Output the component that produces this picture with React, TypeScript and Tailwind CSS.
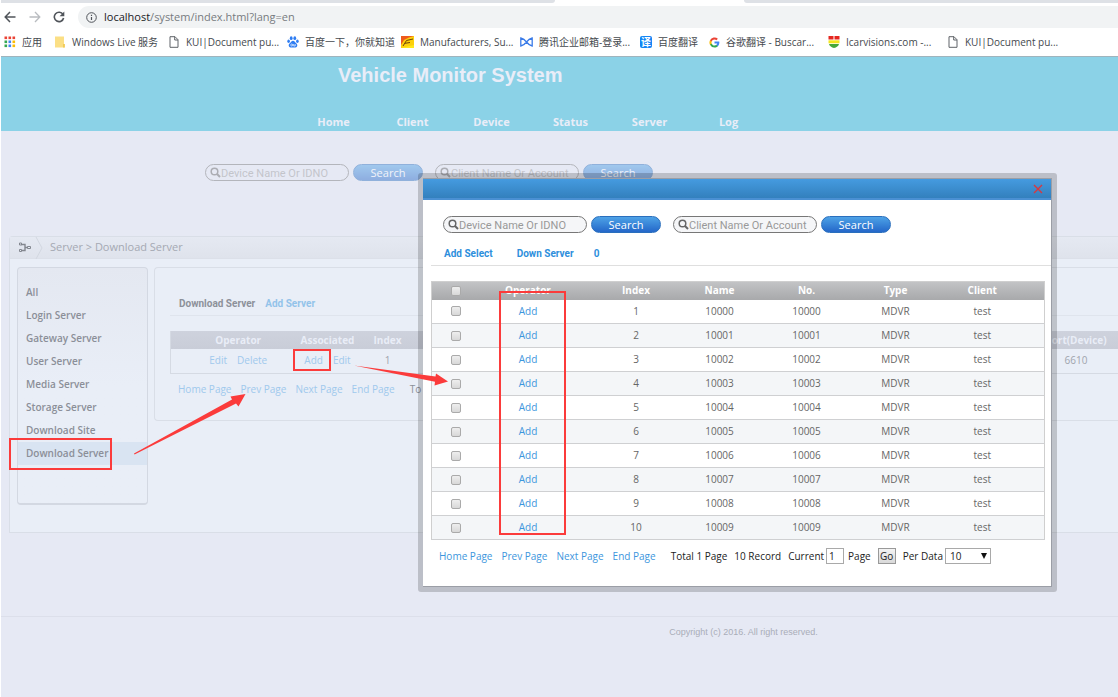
import React from 'react';

const bookmarks = [
  { id: 1, icon: 'apps', label: '应用', width: 'w-[50px]' },
  { id: 2, icon: 'folder', label: 'Windows Live 服务', width: 'w-[114px]' },
  { id: 3, icon: 'file', label: 'KUI|Document pu...', width: 'w-[119px]' },
  { id: 4, icon: 'baidu', label: '百度一下，你就知道', width: 'w-[114px]' },
  { id: 5, icon: 'car', label: 'Manufacturers, Su...', width: 'w-[119px]' },
  { id: 6, icon: 'mail', label: '腾讯企业邮箱-登录...', width: 'w-[120px]' },
  { id: 7, icon: 'translate', label: '百度翻译', width: 'w-[69px]' },
  { id: 8, icon: 'google', label: '谷歌翻译 - Buscar...', width: 'w-[119px]' },
  { id: 9, icon: 'shield', label: 'Icarvisions.com -...', width: 'w-[119px]' },
  { id: 10, icon: 'file', label: 'KUI|Document pu...', width: 'w-[119px]' },
];

const navItems = ['Home', 'Client', 'Device', 'Status', 'Server', 'Log'];

const serverMenu = [
  'All',
  'Login Server',
  'Gateway Server',
  'User Server',
  'Media Server',
  'Storage Server',
  'Download Site',
  'Download Server',
];

const devices = Array.from({ length: 10 }, (_, i) => ({
  index: i + 1,
  name: String(10000 + i),
  no: String(10000 + i),
  type: 'MDVR',
  client: 'test',
}));

const pageLinks = ['Home Page', 'Prev Page', 'Next Page', 'End Page'];

const BookmarkIcon = ({ name }: { name: string }) => {
  switch (name) {
    case 'apps':
      return (
        <svg width="12" height="12" viewBox="0 0 12 12">
          {['#ea4335', '#ea4335', '#ea4335', '#34a853', '#4285f4', '#fbbc05', '#34a853', '#4285f4', '#fbbc05'].map((c, i) => (
            <rect key={i} x={0.5 + (i % 3) * 4} y={0.5 + Math.floor(i / 3) * 4} width="2.6" height="2.6" fill={c} />
          ))}
        </svg>
      );
    case 'folder':
      return (
        <svg width="12" height="12" viewBox="0 0 12 12">
          <path d="M1 .5h9v7.500h.8V11a.6.6 0 0 1-.6.600H1z" fill="#fbdf85" />
          <path d="M9 8h1.800v3.500H9z" fill="#f1cb58" />
        </svg>
      );
    case 'file':
      return (
        <svg width="12" height="12" viewBox="0 0 12 12" fill="none" stroke="#5f6368">
          <path d="M2 .7h5l3 3v7.600H2z" />
          <path d="M6.700.7v3.300H10" />
        </svg>
      );
    case 'baidu':
      return (
        <svg width="12" height="12" viewBox="0 0 12 12" fill="#2f7df2">
          <ellipse cx="4.200" cy="2.200" rx="1.400" ry="1.900" />
          <ellipse cx="7.800" cy="2.200" rx="1.400" ry="1.900" />
          <ellipse cx="1.600" cy="5.200" rx="1.300" ry="1.700" />
          <ellipse cx="10.400" cy="5.200" rx="1.300" ry="1.700" />
          <path d="M6 4.800c1.400 0 1.900 1.300 2.900 2.200 1.300 1.200 1.600 2 1.300 3.100-.5 1.800-2.500 1.400-4.200 1.400s-3.700.4-4.200-1.400c-.3-1.100 0-1.900 1.300-3.100C4.100 6.100 4.600 4.800 6 4.800z" />
          <circle cx="4.700" cy="9" r="1" fill="none" stroke="#fff" strokeWidth=".7" />
          <path d="M6.700 8v2h1.500V8" fill="none" stroke="#fff" strokeWidth=".7" />
        </svg>
      );
    case 'car':
      return (
        <svg width="13" height="12" viewBox="0 0 13 12">
          <rect width="13" height="12" fill="#fcd00c" />
          <path d="M0 0h13L8 1.500 3 4 0 9z" fill="#ee5a1c" />
          <path d="M2 10 5.500 4.500 12 3M4 7.300l5-.8" stroke="#6b4208" strokeWidth="1" fill="none" />
          <path d="M0 12h13V9z" fill="#ffe81c" />
        </svg>
      );
    case 'mail':
      return (
        <svg width="13" height="12" viewBox="0 0 13 12" fill="none" stroke="#3a7be8" strokeWidth="1.300">
          <path d="M.8 2v8C3 9.500 5 8 6.500 6 8 4 10 2.500 12.200 2v8C10 9.500 8 8 6.500 6 5 4 3 2.500.8 2z" />
        </svg>
      );
    case 'translate':
      return (
        <span className="flex h-3 w-3 items-center justify-center rounded-[2px] bg-[#1485f5] text-[10px] leading-3 font-bold text-white">
          译
        </span>
      );
    case 'google':
      return (
        <svg width="11" height="11" viewBox="0 0 24 24">
          <path fill="#4285f4" d="M22.560 12.250c0-.78-.07-1.530-.2-2.250H12v4.260h5.920a5.060 5.060 0 0 1-2.200 3.320v2.770h3.570c2.080-1.920 3.270-4.740 3.270-8.100z" />
          <path fill="#34a853" d="M12 23c2.970 0 5.460-.98 7.280-2.660l-3.570-2.770c-.98.66-2.230 1.060-3.710 1.060-2.860 0-5.290-1.930-6.160-4.530H2.180v2.840A11 11 0 0 0 12 23z" />
          <path fill="#fbbc05" d="M5.840 14.090a6.600 6.600 0 0 1 0-4.180V7.070H2.180a11 11 0 0 0 0 9.860z" />
          <path fill="#ea4335" d="M12 5.380c1.620 0 3.060.56 4.210 1.640l3.150-3.150A11 11 0 0 0 2.180 7.070l3.660 2.840C6.710 7.310 9.140 5.380 12 5.380z" />
        </svg>
      );
    default:
      return (
        <svg width="12" height="12" viewBox="0 0 12 12">
          <path d="M.5 0h5v3.500h-5zM6.500 0h5v3.500h-5z" fill="#e5261f" />
          <path d="M.5 4.300h11v3H.5z" fill="#f4e61e" />
          <path d="M1 8h10c-.5 2-2.500 3.500-5 4C3.500 11.500 1.500 10 1 8z" fill="#46a838" />
        </svg>
      );
  }
};

const SearchGroup = ({ label, id, faded }: { label: string; id: string; faded?: boolean }) => (
  <div className={`flex items-center gap-1 ${faded ? 'opacity-45' : ''}`}>
    <label
      htmlFor={id}
      className={`flex h-[17px] w-36 items-center rounded-full border border-[#777] px-1 ${faded ? '' : 'bg-[#f5f6f8]'}`}
    >
      <svg width="11" height="11" viewBox="0 0 11 11" fill="none" stroke="#666" className="shrink-0">
        <circle cx="4.500" cy="4.500" r="3.300" strokeWidth="1.500" />
        <path d="M7 7l3 3" strokeWidth="2" />
      </svg>
      <input
        id={id}
        type="text"
        aria-label={label}
        placeholder={label}
        className="h-[15px] w-full min-w-0 bg-transparent pt-0.5 font-['Roboto',sans-serif] text-[11px] leading-[13px] outline-none placeholder:text-[#999]"
      />
    </label>
    <button
      type="button"
      className="h-[17px] w-[70px] rounded-full border border-[#2a6fbd] bg-gradient-to-b from-[#4ea2e6] to-[#2567c9] text-[11px] leading-[15px] text-white"
    >
      Search
    </button>
  </div>
);

const Header = () => (
  <header className="border-t border-[#9fb4bd] bg-[#8bd2e7] text-[#e9edf8]">
    <h1 className="flex h-9 items-center pl-[337px] font-['Liberation_Sans',Arial,sans-serif] text-xl font-bold">
      Vehicle Monitor System
    </h1>
    <nav className="flex h-[38px] items-end pb-0.5 pl-[293px] text-[11px] leading-[14px] font-bold">
      {navItems.map((item) => (
        <a key={item} href="#" className="w-[79px] text-center">
          {item}
        </a>
      ))}
    </nav>
  </header>
);

const BrowserBar = () => (
  <div className="bg-white">
    {/* Tab strip */}
    <div className="flex h-[3px]">
      <div className="w-[554px] rounded-br bg-[#dee1e6]" />
      <div className="w-[189px]" />
      <div className="flex-1 rounded-bl bg-[#dee1e6]" />
    </div>
    {/* Address bar */}
    <div className="flex h-[25px] items-end gap-[13px] pl-[3px]">
      <div className="flex h-[22px] w-[61px] items-center justify-between">
        <svg width="12" height="12" viewBox="0 0 12 12" fill="none" stroke="#50545a" strokeWidth="1.500">
          <path d="M11.500 6H1.500M6 1 1.200 6 6 11" />
        </svg>
        <svg width="12" height="12" viewBox="0 0 12 12" fill="none" stroke="#b9bcc0" strokeWidth="1.300">
          <path d="M.5 6h10M6 1l4.800 5L6 11" />
        </svg>
        <svg width="12" height="12" viewBox="0 0 12 12" fill="none" stroke="#50545a" strokeWidth="1.600">
          <path d="M10 3.400A4.700 4.700 0 1 0 10.600 7" />
          <path d="M11.300.5v4.700H6.600z" fill="#50545a" stroke="none" />
        </svg>
      </div>
      <div className="flex h-[22px] flex-1 items-center gap-[7px] rounded-l-full bg-[#f1f3f4] pl-2">
        <svg width="11" height="11" viewBox="0 0 11 11" fill="none" stroke="#50545a">
          <circle cx="5.500" cy="5.500" r="4.800" />
          <path d="M5.500 5v3M5.500 2.700v1.200" strokeWidth="1.200" />
        </svg>
        <span className="text-[11px] text-[#777b80]">
          <span className="text-[#202124]">localhost</span>/system/index.html?lang=en
        </span>
      </div>
    </div>
    {/* Bookmarks */}
    <div className="flex h-7 items-center overflow-hidden pl-[3px] font-['Open_Sans','Noto_Sans_CJK_SC',sans-serif] text-[10px] text-[#45494e]">
      {bookmarks.map((b) => (
        <a key={b.id} href="#" className={`flex shrink-0 items-center gap-1.5 whitespace-nowrap ${b.width}`}>
          <BookmarkIcon name={b.icon} />
          {b.label}
        </a>
      ))}
    </div>
  </div>
);

const ServerPage = () => (
  <main className="pt-[33px]">
    <div className="flex gap-3 pl-[204px]">
      <SearchGroup id="page-device" label="Device Name Or IDNO" faded />
      <SearchGroup id="page-client" label="Client Name Or Account" faded />
    </div>

    <section className="mt-[55px] ml-2 h-[297px] rounded-tl border border-r-0 border-[#d9dee7] bg-[#e9eef7]">
      {/* Breadcrumb */}
      <div className="flex h-[22px] items-center border-b border-[#dce0e9] bg-gradient-to-b from-[#e5e9f2] to-[#dfe3ec] text-[11px] text-[#a5a9b3]">
        <svg width="40" height="22" viewBox="0 0 40 22" fill="none" className="shrink-0">
          <path d="M11 7.500h4v6h-4M15 10.500h3" stroke="#83878f" strokeWidth="1.400" />
          <path d="M9.500 6h2v2h-2zM9.500 12.500h2v2h-2zM17.500 9.500h3v2h-3z" stroke="#83878f" fill="#e5e9f2" />
          <path d="M26 0l6 11-6 11" stroke="#d2d7e0" />
        </svg>
        <span>Server &gt; Download Server</span>
      </div>

      <div className="flex items-start gap-1.5 pt-2 pl-[7px]">
        <aside className="h-[238px] w-[131px] shrink-0 rounded border border-b-2 border-[#d3d8e2] bg-gradient-to-b from-[#e4e8f1] to-[#e9eef7] to-50% pt-[13px]">
          <ul className="text-[10px] font-semibold text-[#8b8f98]">
            {serverMenu.map((item) => (
              <li key={item} className={item === 'Download Server' ? 'bg-[#d9e4f2]' : ''}>
                <a href="#" className="block h-[23px] pl-2 leading-[23px]">
                  {item}
                </a>
              </li>
            ))}
          </ul>
        </aside>

        <div className="h-[154px] flex-1 rounded-l border border-r-0 border-[#d9dee7] pt-6 pl-[15px]">
          <div className="flex h-6 items-center gap-2.5 border-b border-[#dfe4ed] pl-[9px] font-['Roboto',sans-serif] text-[10px] font-bold">
            <span className="text-[#8d919a]">Download Server</span>
            <a href="#" className="text-[#93c3ea]">Add Server</a>
          </div>
          <table className="mt-[15px] w-full table-fixed border-l border-[#d5dae3] text-center text-[10px]">
            <thead>
              <tr className="h-[18px] bg-gradient-to-b from-[#ced2dd] to-[#c9cdd8] text-[#e9edf7]">
                <th className="w-[135px]">Operator</th>
                <th className="w-[44px]"><span className="-mx-4">Associated</span></th>
                <th className="w-[76px]">Index</th>
                <th />
                <th className="w-[84px]">Port(Device)</th>
              </tr>
            </thead>
            <tbody>
              <tr className="h-6 border-b border-[#d5dae3] text-[#a0a4ad]">
                <td className="space-x-2.5 text-[#a0c9ed]">
                  <a href="#">Edit</a>
                  <a href="#">Delete</a>
                </td>
                <td className="whitespace-nowrap text-[#a0c9ed]">
                  <span className="flex justify-center gap-2.5">
                    <a href="#">Add</a>
                    <a href="#">Edit</a>
                  </span>
                </td>
                <td>1</td>
                <td />
                <td>6610</td>
              </tr>
            </tbody>
          </table>
          <div className="flex gap-[9px] pt-2 pl-2 text-[10px] text-[#a0c9ed]">
            {pageLinks.map((link) => (
              <a key={link} href="#">{link}</a>
            ))}
            <span className="pl-1.5 text-[#8d919a]">To</span>
          </div>
        </div>
      </div>
    </section>

    <footer className="mt-[83px] border-t border-[#dcdfea] pt-[7px] pl-[368px] text-center font-['Liberation_Sans',Arial,sans-serif] text-[9px] leading-4 text-[#a9adb8]">
      Copyright (c) 2016. All right reserved.
    </footer>
  </main>
);

const checkboxClass =
  'block mx-auto h-[10px] w-[10px] appearance-none rounded-[2px] border border-[#aaa] bg-gradient-to-b from-[#eee] to-[#d8d8d8]';

const DeviceDialog = () => (
  <div role="dialog" aria-label="Add device" className="absolute top-[173px] left-[417px] w-[639px] rounded-[3px] bg-black/18 p-[5px]">
    <div className="border border-l-0 border-[#9b9ea6] bg-white">
      <div className="flex h-[21px] items-center justify-end border-b-2 border-[#4a90d3] bg-gradient-to-b from-[#459be0] to-[#3380bd] pr-2">
        <button type="button" aria-label="Close">
          <svg width="10" height="10" viewBox="0 0 10 10" stroke="#d8383f" strokeWidth="1.400">
            <path d="M1 1l8 8M9 1L1 9" />
          </svg>
        </button>
      </div>

      <div className="pl-2">
        <div className="flex gap-3 pt-4 pl-3">
          <SearchGroup id="dialog-device" label="Device Name Or IDNO" />
          <SearchGroup id="dialog-client" label="Client Name Or Account" />
        </div>
        <div className="mt-[9px] flex h-6 items-center gap-6 border-b border-[#dfdfdf] pl-[13px] font-['Roboto',sans-serif] text-[10px] font-bold text-[#2e8fdc]">
          <a href="#">Add Select</a>
          <a href="#">Down Server</a>
          <span className="-ml-1">0</span>
        </div>

        <div className="pt-[15px] pr-1.5">
          <table className="w-full table-fixed border-collapse border border-[#cfcfcf] text-center text-[10px] text-[#666]">
            <thead>
              <tr className="h-[18px] bg-gradient-to-b from-[#c2c3c5] to-[#a8a9ab] text-white">
                <th className="w-[49px]">
                  <input type="checkbox" aria-label="Select all" className={checkboxClass} />
                </th>
                <th className="w-[95px]">Operator</th>
                <th className="w-[121px]">Index</th>
                <th className="w-[46px]">Name</th>
                <th className="w-[128px]">No.</th>
                <th className="w-[50px]">Type</th>
                <th>Client</th>
              </tr>
            </thead>
            <tbody>
              {devices.map((d) => (
                <tr key={d.index} className="h-6 border-b border-[#cfd0d2] even:bg-[#f4f6f8]">
                  <td>
                    <input type="checkbox" aria-label={`Select ${d.name}`} className={checkboxClass} />
                  </td>
                  <td>
                    <a href="#" className="text-[#3d96dd]">Add</a>
                  </td>
                  <td>{d.index}</td>
                  <td>{d.name}</td>
                  <td>{d.no}</td>
                  <td>{d.type}</td>
                  <td>{d.client}</td>
                </tr>
              ))}
            </tbody>
          </table>
        </div>

        {/* Pagination */}
        <div className="flex h-[46px] items-start gap-[9px] pt-2 pl-2 text-[10px] leading-4 whitespace-nowrap text-[#222]">
          {pageLinks.map((link) => (
            <a key={link} href="#" className="text-[#3d96dd]">{link}</a>
          ))}
          <div className="flex gap-[7px] pl-1.5">
            <span>Total 1 Page</span>
            <span>10 Record</span>
            <label className="flex gap-0.5">
              Current
              <input type="text" defaultValue="1" className="h-4 w-[18px] border border-[#a9a9a9] px-0.5 text-[10px]" />
              <span className="pl-0.5">Page</span>
            </label>
            <button type="button" className="h-4 w-[18px] border border-[#999] bg-gradient-to-b from-[#f4f4f4] to-[#d9d9d9] leading-[14px]">
              Go
            </button>
            <label className="flex gap-0.5">
              Per Data
              <span className="relative">
                <select className="h-4 w-[46px] appearance-none border border-[#a9a9a9] bg-white pl-1 text-[10px] leading-[14px]">
                  <option>10</option>
                </select>
                <svg width="6" height="6" viewBox="0 0 6 6" className="pointer-events-none absolute top-[5px] right-1">
                  <path d="M0 0h6L3 6z" fill="#111" />
                </svg>
              </span>
            </label>
          </div>
        </div>
      </div>
    </div>
  </div>
);

const Annotations = () => (
  <div className="pointer-events-none absolute inset-0">
    <div className="absolute top-[438px] left-2 h-8 w-[103px] border-2 border-[#fb3b3b]" />
    <div className="absolute top-[349px] left-[292px] h-[22px] w-[38px] border-2 border-[#fb3b3b]" />
    <div className="absolute top-[291px] left-[498px] h-[244px] w-[67px] border-2 border-[#fb3b3b]" />
    <svg width="460" height="480" viewBox="0 0 460 480" fill="#fb3b3b" className="absolute top-0 left-0">
      <path d="M133 453.500 231 399.500 229.500 396.500 244.500 394 237.500 406.500 235 403.500 133.500 454.500z" />
      <path d="M353 365.500 434.500 376.500 435 373.500 447 381.500 433.500 385.500 434 381.700z" />
    </svg>
  </div>
);

const App: React.FC = () => {
  return (
    <div className="relative min-h-screen overflow-hidden border-l border-white bg-[#e6e9f4] font-['Open_Sans','Noto_Sans',sans-serif]">
      <BrowserBar />
      <Header />
      <ServerPage />
      <DeviceDialog />
      <Annotations />
    </div>
  );
};

export default App;
